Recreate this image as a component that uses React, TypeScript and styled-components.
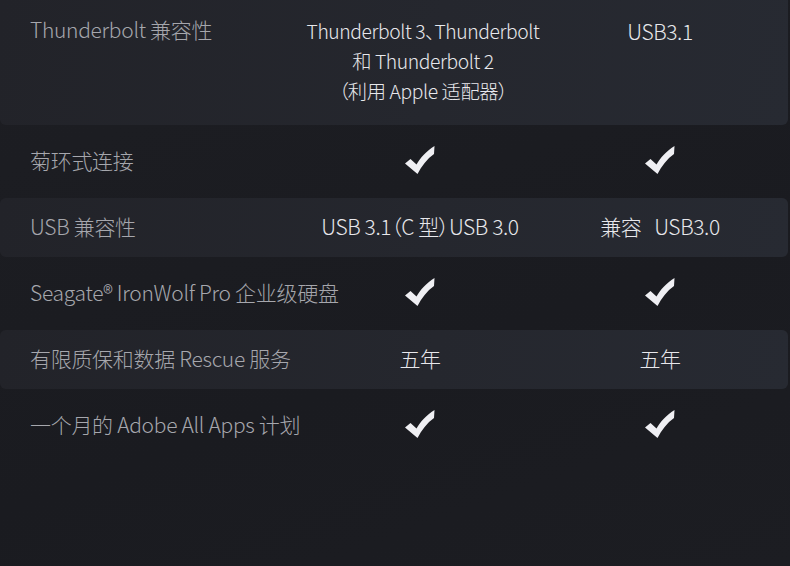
import * as React from 'react';
import styled, { createGlobalStyle } from 'styled-components';

const GlobalStyle = createGlobalStyle`
	html, body {
		margin: 0;
		padding: 0;
		background: #1b1c21;
	}
	body {
		font-family: "Noto Sans CJK SC", "Noto Sans", sans-serif;
		-webkit-font-smoothing: antialiased;
	}
`;

const Page = styled.div`
	width: 790px;
	height: 566px;
	overflow: hidden;
	background: linear-gradient(160deg, #1d1e23 0%, #1a1b20 60%, #1c1d22 100%);
`;

const Table = styled.div`
	width: 788px;
	display: flex;
	flex-direction: column;
`;

const Row = styled.div<{ $striped?: boolean; $first?: boolean; $height: number }>`
	display: grid;
	grid-template-columns: 300px 240px 240px;
	align-items: center;
	min-height: ${props => props.$height}px;
	box-sizing: border-box;
	padding-bottom: 4px;
	background: ${props => props.$striped
		? 'linear-gradient(100deg, #222329 0%, #25272e 55%, #272a32 100%)'
		: 'transparent'};
	border-radius: ${props => props.$first ? '0 0 6px 6px' : '6px'};
	${props => props.$first && `
		align-items: start;
		padding: 16px 0 19px;
	`}
`;

const Label = styled.div<{ $top?: boolean }>`
	padding-left: 30px;
	margin-top: ${props => props.$top ? '-2px' : '0'};
	font-size: 21px;
	font-weight: 300;
	line-height: 30px;
	color: #a6a7ad;
	white-space: nowrap;
	letter-spacing: -0.3px;
	font-feature-settings: 'palt';
`;

const Value = styled.div<{ $pre?: boolean; $small?: boolean }>`
	text-align: center;
	padding-left: ${props => props.$small ? '6px' : '0'};
	font-size: ${props => props.$small ? '19.3px' : '21px'};
	font-weight: 300;
	line-height: 30px;
	color: #e8e8ec;
	white-space: ${props => props.$pre ? 'pre' : 'nowrap'};
	letter-spacing: -0.4px;
	font-feature-settings: 'palt';
	display: flex;
	flex-direction: column;
	align-items: center;
`;

const Check = styled.svg`
	width: 30px;
	height: 28px;
	display: block;
`;

const Tick = () => (
	<Check viewBox='0 0 30 28'>
		<path
			fill='#efeff3'
			d='M0 17.5 L5.5 13 L11.5 18.5 C15.5 11.5 21 5.5 29.5 0 L29 8 C22 13 16.5 20 12.5 28 Z'
		/>
	</Check>
);

const rows = [
	{ label: '菊环式连接', a: <Tick />, b: <Tick /> },
	{ label: 'USB 兼容性', a: 'USB 3.1（C 型）USB 3.0', b: '兼容   USB3.0' },
	{ label: 'Seagate® IronWolf Pro 企业级硬盘', a: <Tick />, b: <Tick /> },
	{ label: '有限质保和数据 Rescue 服务', a: '五年', b: '五年' },
	{ label: '一个月的 Adobe All Apps 计划', a: <Tick />, b: <Tick /> },
];

export default function App() {
	return (
		<Page>
			<GlobalStyle />
			<Table>
				<Row $striped $first $height={125}>
					<Label $top>Thunderbolt 兼容性</Label>
					<Value $small>
						<span>Thunderbolt 3、Thunderbolt</span>
						<span>和 Thunderbolt 2</span>
						<span>（利用 Apple 适配器）</span>
					</Value>
					<Value>USB3.1</Value>
				</Row>
				{rows.map((r, i) => (
					<Row key={i} $striped={i % 2 === 1} $height={i % 2 === 1 ? 59 : 73}>
						<Label>{r.label}</Label>
						<Value>{r.a}</Value>
						<Value $pre>{r.b}</Value>
					</Row>
				))}
			</Table>
		</Page>
	);
}
